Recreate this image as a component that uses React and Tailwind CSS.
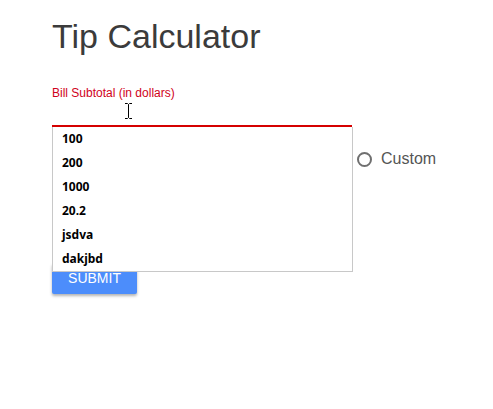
const suggestions = ['100', '200', '1000', '20.2', 'jsdva', 'dakjbd']

function IBeam() {
  return (
    <svg className="absolute left-[124px] top-[103px]" width="9" height="16" viewBox="0 0 9 16">
      <path d="M1 0.5h2.5l1 1 1-1h2.5M4.5 1.5v13M1 15.5h2.5l1-1 1 1h2.5" fill="none" stroke="#000" strokeWidth="1" />
    </svg>
  )
}

export default function App() {
  return (
    <div className="relative h-[409px] w-[493px] bg-white font-['Liberation_Sans',Arial,sans-serif]">
      <div className="pl-[52px] pt-[14px]">
        <h1 className="text-[34px] leading-[44px] text-[#3b3b3b]">Tip Calculator</h1>

        <div className="mt-[28px] w-[300px]">
          <label className="block text-[12px] leading-[14px] text-[#d0021b]">Bill Subtotal (in dollars)</label>
          <div className="h-[27px] border-b-2 border-[#d50000]" />
        </div>

        <div className="mt-[20px] flex items-center gap-[9px] pl-[305px]">
          <span className="h-[15px] w-[15px] rounded-full border-2 border-[#6f6f6f]" />
          <span className="text-[16px] text-[#555]">Custom</span>
        </div>

        <button className="mt-[92px] h-[31px] w-[85px] rounded-[2px] bg-[#4c8dfb] text-[14px] text-white shadow-[0_2px_3px_rgba(0,0,0,0.3)]">
          SUBMIT
        </button>
      </div>

      <IBeam />

      <ul className="absolute left-[52px] top-[127px] w-[301px] border border-t-0 border-[#c8c8c8] bg-white font-['Noto_Sans',sans-serif] text-[12px] font-bold text-black">
        {suggestions.map((s) => (
          <li key={s} className="flex h-[24px] items-center pl-[9px]">{s}</li>
        ))}
      </ul>
    </div>
  )
}
